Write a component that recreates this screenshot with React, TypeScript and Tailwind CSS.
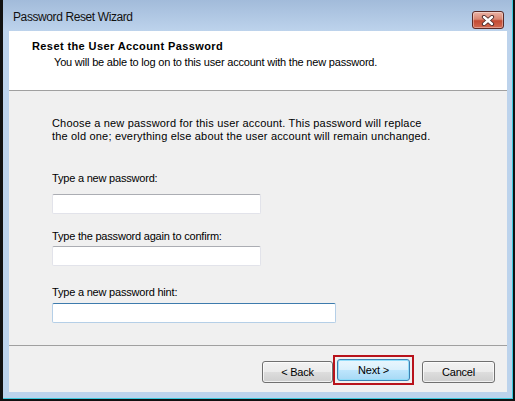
import React from 'react';

const font = { fontFamily: '"Liberation Sans", Arial, sans-serif' };

function CloseButton() {
  return (
    <div className="mt-[11px] w-[32px] h-[18px] rounded-[3px] border border-[#5b2a26] bg-[linear-gradient(to_bottom,#eab3a6,#d98672_45%,#c24a33_55%,#d36a52)] flex items-center justify-center shadow-[inset_0_0_0_1px_rgba(255,255,255,0.35)]">
      <svg width="14" height="11" viewBox="0 0 14 11">
        <path d="M3 2 L11 9 M11 2 L3 9" stroke="#4a2a2a" strokeWidth="4.2" strokeLinecap="round" />
        <path d="M3 2 L11 9 M11 2 L3 9" stroke="#ffffff" strokeWidth="2.4" strokeLinecap="round" />
      </svg>
    </div>
  );
}

function TextBox({ width, focused }: { width: string; focused?: boolean }) {
  return (
    <div
      className={
        focused
          ? `${width} h-[20px] bg-white rounded-[2px] border border-[#b5cfe7] border-t-[#3d7bad]`
          : `${width} h-[20px] bg-white rounded-[2px] border border-[#e2e3ea] border-t-[#abadb3]`
      }
    />
  );
}

const buttonClass =
  'h-[22px] rounded-[3px] border border-[#707070] bg-[linear-gradient(to_bottom,#f2f2f2,#ebebeb_50%,#dddddd_50%,#cfcfcf)] text-[11px] tracking-[-0.2px] shadow-[inset_0_0_0_1px_rgba(255,255,255,0.7)]';

export default function App() {
  return (
    <div className="w-[515px] h-[401px] bg-[#111111] pl-[3px] pr-[2px] pb-[2px] flex" style={font}>
      <div className="flex-1 flex flex-col border-r border-b border-[#3cc8dc] bg-[linear-gradient(to_bottom,#a2bbda,#bdd3ec_31px,#bcd3ec)] pl-[6px] pr-[5px] pb-[6px]">
        {/* title bar */}
        <div className="h-[31px] flex items-start justify-between pr-[3px]">
          <div className="pl-[4px] pt-[9px] text-[12px] leading-[16px] tracking-[-0.4px] text-[#111]">
            Password Reset Wizard
          </div>
          <CloseButton />
        </div>

        {/* client area */}
        <div className="flex-1 flex flex-col bg-[#f0f0f0] text-[11px] leading-[13px] tracking-[-0.2px] text-black">
          <div className="h-[60px] bg-white border-b border-[#a0a0a0] pt-[9px]">
            <div className="pl-[23px] font-bold tracking-[0.4px]">Reset the User Account Password</div>
            <div className="pl-[45px] mt-[3px]">You will be able to log on to this user account with the new password.</div>
          </div>

          <div className="flex-1 pl-[43px] pt-[26px]">
            <p className="tracking-[0.18px]">
              Choose a new password for this user account. This password will replace
              <br />
              the old one; everything else about the user account will remain unchanged.
            </p>
            <div className="mt-[29px]">Type a new password:</div>
            <div className="mt-[9px]">
              <TextBox width="w-[209px]" />
            </div>
            <div className="mt-[16px]">Type the password again to confirm:</div>
            <div className="mt-[3px]">
              <TextBox width="w-[209px]" />
            </div>
            <div className="mt-[20px]">Type a new password hint:</div>
            <div className="mt-[4px]">
              <TextBox width="w-[284px]" focused />
            </div>
          </div>

          {/* button row */}
          <div className="h-[47px] border-t border-[#a0a0a0] flex justify-end items-start pt-[9px] pr-[12px]">
            <button className={`mt-[6px] w-[71px] ${buttonClass}`}>&lt; Back</button>
            <div className="border-2 border-[#b8121b] p-[2px]">
              <button className="w-[73px] h-[22px] rounded-[3px] border border-[#3c7fb1] bg-[linear-gradient(to_bottom,#eaf6fd,#d9f0fc_50%,#bee6fd_50%,#a7d9f5)] text-[11px] tracking-[-0.2px] shadow-[inset_0_0_0_1px_rgba(140,220,250,0.9)]">
                Next &gt;
              </button>
            </div>
            <button className={`ml-[8px] mt-[6px] w-[73px] ${buttonClass}`}>Cancel</button>
          </div>
        </div>
      </div>
    </div>
  );
}
